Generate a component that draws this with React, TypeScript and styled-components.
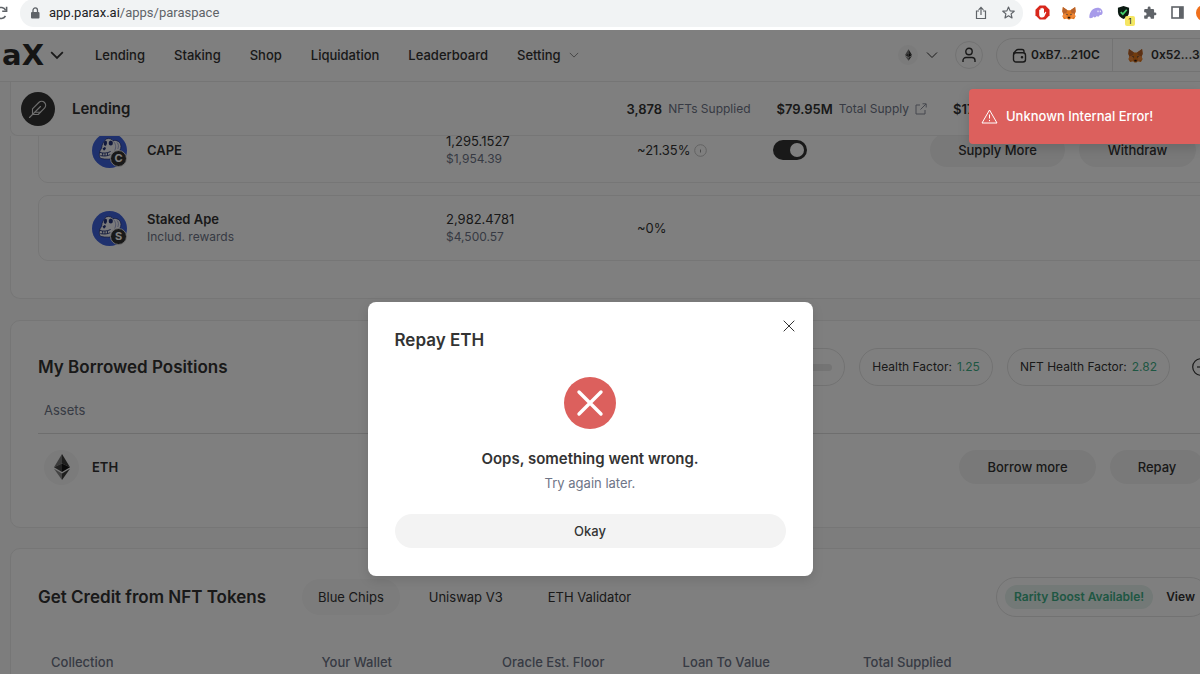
import React from "react";
import styled, { createGlobalStyle, css } from "styled-components";

const GlobalStyle = createGlobalStyle`
  *, *::before, *::after { box-sizing: border-box; }
  html, body, #root { height: 100%; }
  body {
    margin: 0;
    overflow: hidden;
    background: #fff;
    color: #333;
    font-family: Inter, "Liberation Sans", sans-serif;
    font-size: 13px;
    line-height: 18px;
  }
  button { font: inherit; color: inherit; border: 0; background: none; padding: 0; cursor: pointer; }
  a { color: inherit; text-decoration: none; }
  h1, h2, p { margin: 0; }
  svg { display: block; flex: none; }
`;

const Window = styled.div`
  display: flex;
  flex-direction: column;
  height: 100vh;
  overflow: hidden;
`;

/* Browser toolbar */

const BrowserBar = styled.header`
  display: flex;
  align-items: center;
  gap: 6px;
  height: 30px;
  flex: none;
  padding-bottom: 5px;
  background: #fff;
  color: #5f6368;
`;

const Reload = styled.button`
  display: flex;
  width: 14px;
  margin-left: -6px;
  margin-right: 6px;
  justify-content: flex-end;
  color: #5f6368;
`;

const AddressBar = styled.div`
  display: flex;
  align-items: center;
  flex: 1;
  gap: 7px;
  height: 28px;
  padding: 0 8px;
  border-radius: 14px;
  background: #f1f3f4;
`;

const Address = styled.div`
  flex: 1;
  font-family: Roboto, sans-serif;
  font-size: 13px;
  color: #5f6368;
  b { font-weight: 400; color: #202124; }
`;

const ToolButton = styled.button`
  position: relative;
  display: flex;
  align-items: center;
  justify-content: center;
  width: 14px;
  height: 20px;
  color: #5f6368;
`;

const AddressActions = styled.div`
  display: flex;
  gap: 13px;
`;

const Extensions = styled.div`
  display: flex;
  align-items: center;
  gap: 13px;
  margin: 0 -11px 0 6px;
`;

const ExtensionBadge = styled.span`
  position: absolute;
  right: -5px;
  bottom: -3px;
  width: 10px;
  height: 10px;
  border-radius: 2px;
  background: #f5e663;
  color: #222;
  font-size: 8px;
  line-height: 10px;
  text-align: center;
`;

/* Application page */

const Page = styled.div`
  position: relative;
  flex: 1;
  min-height: 0;
  overflow: hidden;
  background: #fafafa;
`;

const SiteNav = styled.nav`
  display: flex;
  align-items: center;
  height: 52px;
  padding-bottom: 1px;
  background: #fefefe;
  border-bottom: 1px solid #ebebeb;
  font-size: 13px;
  font-weight: 500;
`;

const Logo = styled.a`
  display: flex;
  justify-content: flex-end;
  width: 44px;
  font-family: "DejaVu Sans", sans-serif;
  font-size: 29px;
  line-height: 32px;
  font-weight: 700;
  color: #2b2b2b;
`;

const LogoMenu = styled.button`
  display: flex;
  margin: 0 31px 0 6px;
`;

const NavLinks = styled.div`
  display: flex;
  align-items: center;
  flex: 1;
  gap: 29px;
`;

const NavItem = styled.a`
  display: flex;
  align-items: center;
  gap: 8px;
  svg { color: #777; }
`;

const NavTools = styled.div`
  display: flex;
  align-items: center;
  flex: none;
  margin-right: -60px;
`;

const Network = styled.button`
  display: flex;
  align-items: center;
  gap: 8px;
  margin-right: 17px;
`;

const TokenDisc = styled.span<{ $size: number }>`
  display: flex;
  align-items: center;
  justify-content: center;
  width: ${(p) => p.$size}px;
  height: ${(p) => p.$size}px;
  border-radius: 50%;
  background: #f6f6f6;
`;

const RoundButton = styled.button`
  display: flex;
  align-items: center;
  justify-content: center;
  width: 28px;
  height: 28px;
  margin-right: 13px;
  border: 1px solid #e6e6e6;
  border-radius: 50%;
`;

const Wallets = styled.div`
  display: flex;
  height: 34px;
  border: 1px solid #e6e6e6;
  border-radius: 17px;
  font-size: 12px;
  font-weight: 600;
`;

const Wallet = styled.button<{ $width: number }>`
  display: flex;
  align-items: center;
  gap: 4px;
  width: ${(p) => p.$width}px;
  padding-left: 15px;
  & + & { border-left: 1px solid #e6e6e6; gap: 8px; }
`;

const panel = css`
  margin: 0 -38px 0 10px;
  border: 1px solid #ececec;
  background: #fff;
`;

const SubHeader = styled.header`
  ${panel}
  display: flex;
  align-items: center;
  height: 54px;
  padding-left: 10px;
  border-top: 0;
  border-radius: 0 0 8px 8px;
`;

const FeatherDisc = styled.span`
  display: flex;
  align-items: center;
  justify-content: center;
  width: 34px;
  height: 34px;
  margin-right: 17px;
  border-radius: 50%;
  background: #333;
  color: #ddd;
`;

const PageTitle = styled.h1`
  flex: 1;
  font-size: 15px;
  line-height: 20px;
  font-weight: 600;
`;

const Stats = styled.div`
  display: flex;
  gap: 26px;
`;

const Stat = styled.div`
  display: flex;
  align-items: center;
  gap: 6px;
  font-size: 12px;
  color: #6e7587;
  b { font-size: 13px; font-weight: 600; color: #333; }
`;

const LastStat = styled(Stat)`
  width: 284px;
`;

const SuppliedPanel = styled.section`
  ${panel}
  height: 163px;
  overflow: hidden;
  padding: 0 27px;
  border-top: 0;
  border-radius: 0 0 10px 10px;
`;

const SuppliedTable = styled.table`
  display: block;
  margin-top: -19px;
  tbody { display: flex; flex-direction: column; gap: 12px; }
`;

const SuppliedRow = styled.tr`
  display: grid;
  grid-template-columns: 354fr 191fr 136fr 157fr 279fr;
  align-items: center;
  height: 66px;
  padding-left: 53px;
  border: 1px solid #ececec;
  border-radius: 10px;
`;

const Cell = styled.td`
  padding: 0;
`;

const Asset = styled.div`
  display: flex;
  align-items: center;
  gap: 20px;
`;

const Strong = styled.span`
  display: block;
  font-size: 13px;
  font-weight: 600;
`;

const Value = styled.span`
  display: flex;
  align-items: center;
  gap: 4px;
  font-size: 13px;
`;

const Muted = styled.span`
  display: block;
  font-size: 12px;
  color: #6e7587;
`;

const Avatar = styled.span`
  position: relative;
  width: 35px;
  height: 35px;
`;

const AvatarBadge = styled.span`
  position: absolute;
  right: 0;
  bottom: 1px;
  width: 17px;
  height: 17px;
  border: 1px solid #ddd;
  border-radius: 50%;
  background: #333;
  color: #fff;
  font-size: 11px;
  line-height: 15px;
  font-weight: 700;
  text-align: center;
`;

const Switch = styled.input`
  appearance: none;
  display: block;
  width: 34px;
  height: 20px;
  margin: 0;
  padding: 3px;
  border-radius: 10px;
  background: #333;
  &::before {
    content: "";
    display: block;
    width: 14px;
    height: 14px;
    border-radius: 50%;
    background: #fff;
  }
  &:checked::before { margin-left: 14px; }
`;

const Actions = styled.div`
  display: flex;
  gap: 14px;
`;

const PillButton = styled.button<{ $width: number }>`
  width: ${(p) => p.$width}px;
  height: 34px;
  flex: none;
  border-radius: 17px;
  background: #f3f3f3;
  font-size: 13px;
  font-weight: 500;
`;

const BorrowedPanel = styled.section`
  ${panel}
  height: 208px;
  margin-top: 21px;
  padding: 27px 27px 0;
  border-radius: 10px;
`;

const PanelHead = styled.div`
  display: flex;
  align-items: center;
`;

const PanelTitle = styled.h2`
  font-size: 17px;
  line-height: 24px;
  font-weight: 600;
`;

const Factors = styled.div`
  display: flex;
  align-items: center;
  gap: 14px;
  margin-left: auto;
`;

const FactorPill = styled.div`
  display: flex;
  align-items: center;
  gap: 5px;
  height: 38px;
  padding: 0 12px;
  border: 1px solid #e4e4e4;
  border-radius: 19px;
  font-size: 12px;
  span { color: #3fae86; }
`;

const Meter = styled.i`
  width: 80px;
  height: 7px;
  border-radius: 4px;
  background: #e8e8e8;
`;

const MoreInfo = styled.button`
  display: flex;
  margin: 0 0 0 8px;
`;

const BorrowedTable = styled.table`
  display: block;
  thead, tbody { display: block; }
  th { padding: 0; font-weight: 400; color: #6e7587; }
`;

const BorrowedHead = styled.tr`
  display: flex;
  align-items: center;
  height: 48px;
  padding-left: 6px;
  border-bottom: 1px solid #dcdcdc;
`;

const BorrowedRow = styled.tr`
  display: flex;
  align-items: center;
  justify-content: space-between;
  height: 66px;
  padding: 0 6px;
`;

const EthAsset = styled(Asset)`
  gap: 13px;
`;

const CreditPanel = styled.section`
  ${panel}
  margin-top: 20px;
  padding: 28px 27px 0;
  border-radius: 10px;
  height: 240px;
`;

const Tabs = styled.div`
  display: flex;
  gap: 13px;
  margin-left: 36px;
`;

const Tab = styled.button<{ $active?: boolean }>`
  height: 36px;
  padding: 0 16px;
  border-radius: 18px;
  background: ${(p) => (p.$active ? "#f8f8f8" : "#fefefe")};
  font-size: 13px;
`;

const Boost = styled.div`
  display: flex;
  align-items: center;
  gap: 13px;
  width: 214px;
  height: 40px;
  margin-left: auto;
  padding-left: 8px;
  border: 1px solid #e4e4e4;
  border-radius: 20px;
  font-size: 12px;
  font-weight: 600;
`;

const BoostTag = styled.span`
  height: 24px;
  padding: 0 9px;
  border-radius: 12px;
  background: #e6f2ee;
  color: #3fae86;
  line-height: 24px;
  white-space: nowrap;
`;

const CreditTable = styled.table`
  width: 100%;
  margin-top: 36px;
  border-spacing: 0;
  table-layout: fixed;
  th {
    width: 15.4%;
    padding: 0;
    text-align: left;
    font-weight: 500;
    color: #6e7587;
  }
  th:first-child { width: 24.2%; padding-left: 13px; }
  th:last-child { width: auto; }
`;

/* Layers above the page */

const Overlay = styled.div`
  position: absolute;
  inset: 0;
  display: flex;
  justify-content: center;
  align-items: flex-start;
  padding: 272px 20px 0 0;
  background: rgba(0, 0, 0, 0.5);
`;

const Dialog = styled.div`
  position: relative;
  display: flex;
  flex-direction: column;
  align-items: center;
  width: 445px;
  padding: 26px 27px 28px;
  border-radius: 8px;
  background: #fff;
  box-shadow: 0 4px 12px rgba(0, 0, 0, 0.12);
`;

const DialogTitle = styled.h2`
  align-self: stretch;
  margin-bottom: 24px;
  font-size: 17px;
  line-height: 25px;
  font-weight: 600;
`;

const CloseButton = styled.button`
  position: absolute;
  top: 18px;
  right: 18px;
`;

const DialogMessage = styled.p`
  margin-top: 18px;
  font-size: 15px;
  line-height: 24px;
  font-weight: 600;
`;

const DialogHint = styled.p`
  margin-bottom: 19px;
  font-size: 13px;
  line-height: 24px;
  color: #6e7587;
`;

const OkayButton = styled.button`
  align-self: stretch;
  height: 34px;
  border-radius: 17px;
  background: #f3f3f3;
  font-size: 13px;
  font-weight: 500;
`;

const Toast = styled.div`
  position: absolute;
  top: 59px;
  right: 0;
  display: flex;
  align-items: center;
  gap: 8px;
  width: 231px;
  height: 55px;
  padding: 0 0 1px 12px;
  border-radius: 4px 0 0 4px;
  background: #dc605d;
  box-shadow: 0 4px 12px rgba(0, 0, 0, 0.15);
  color: #fff;
  font-size: 13px;
  font-weight: 500;
`;

/* Drawings */

const Chevron = ({ size = 12, width = 1.2 }: { size?: number; width?: number }) => (
  <svg width={size} height={size} viewBox="0 0 12 12" fill="none" stroke="currentColor" strokeWidth={width}>
    <path d="M1 3.5l5 5 5-5" />
  </svg>
);

const Fox = ({ size = 15 }: { size?: number }) => (
  <svg width={size} height={size} viewBox="0 0 16 16">
    <path d="M1 1l5.3 3.8h3.4L15 1l.6 5-1 3 .8 3-1.6 3-3.3-.8L9 15.500H7L5.500 14.200 2.200 15l-1.600-3 .8-3-1-3z" fill="#e2761b" />
    <path d="M1 1l5.300 3.800L5 8 1.400 9l-1-3zM15 1L9.700 4.800 11 8l3.600 1 1-3z" fill="#b8622a" />
    <path d="M5 8l.5 6.200L.6 12l.8-3zM11 8l-.5 6.200 4.900-2.200-.8-3z" fill="#f0893a" />
    <path d="M3.800 8.800l2.400.2.300 1.500zM12.200 8.800L9.800 9l-.3 1.500z" fill="#233447" />
    <path d="M6.600 13l.5-.6h1.800l.5.600-.4 1.400H7z" fill="#2b1a12" />
  </svg>
);

const EthMark = ({ height }: { height: number }) => (
  <svg width={Math.round(height * 0.62)} height={height} viewBox="0 0 16 26">
    <path d="M8 0L0 13.200 8 9.600z" fill="#777" />
    <path d="M8 0l8 13.200L8 9.600z" fill="#3c3c3b" />
    <path d="M0 13.200L8 9.600V18z" fill="#444" />
    <path d="M16 13.200L8 9.600V18z" fill="#141414" />
    <path d="M0 14.800l8 4.700V26z" fill="#888" />
    <path d="M16 14.800l-8 4.700V26z" fill="#3c3c3b" />
  </svg>
);

const ApeIcon = () => (
  <svg width="35" height="35" viewBox="0 0 35 35">
    <circle cx="17.500" cy="17.500" r="17.500" fill="#3f62dc" />
    <path
      d="M12.500 8.200C13 5.800 16 4.800 18.500 5.800c1.200.4 2 1 2.500 1.900C24.500 6.500 29 9 29 13.500c0 3-1.700 5.200-4 6L22.500 25c-3 1.500-9 1.500-13.500.5-1.800-.6-2.300-5-.8-8 .8-1.500 1.500-2 1.600-3.500.1-2 1.200-4.500 2.700-5.800z"
      fill="#f4f4f8"
      stroke="#25347a"
      strokeWidth=".8"
    />
    <ellipse cx="13.400" cy="10.300" rx="1.600" ry="2.600" transform="rotate(10 13.400 10.300)" fill="#25347a" />
    <ellipse cx="18.800" cy="10" rx="2.100" ry="2.600" fill="#25347a" />
    <path d="M10.500 15.500l2.600-1.700.8 1.900-1.900 2.100z" fill="#25347a" />
    <path d="M7.600 19.300c3.400 1.300 7.400 1 11-.8M8.300 22.600c4 .8 7.400.4 10-1M10.500 19.900l.3 3M13 20.200v2.900M15.500 19.800v2.800" fill="none" stroke="#25347a" strokeWidth=".9" />
    <path d="M21.500 8.500c2.300 2.500 2.900 5.500 1.200 9M25 9.500c1.600 1.500 1.800 4 .8 6.500" fill="none" stroke="#8a93c4" strokeWidth=".8" />
  </svg>
);

const ApeAvatar = ({ letter }: { letter: string }) => (
  <Avatar>
    <ApeIcon />
    <AvatarBadge>{letter}</AvatarBadge>
  </Avatar>
);

const navItems = ["Lending", "Staking", "Shop", "Liquidation", "Leaderboard"];
const creditColumns = ["Collection", "Your Wallet", "Oracle Est. Floor", "Loan To Value", "Total Supplied", ""];

const BrowserToolbar = () => (
  <BrowserBar>
    <Reload aria-label="Reload">
      <svg width="14" height="14" viewBox="0 0 14 14" fill="none" stroke="currentColor" strokeWidth="1.600">
        <path d="M11.500 10A5.500 5.500 0 1 1 11.700 4.300" />
        <path d="M12.600 .8v4.400H8.200" />
      </svg>
    </Reload>
    <AddressBar>
      <svg width="14" height="14" viewBox="0 0 14 14">
        <rect x="3" y="6" width="8.500" height="6.500" rx="1" fill="#5f6368" />
        <path d="M5 6V4.200a2.200 2.200 0 0 1 4.500 0V6" fill="none" stroke="#5f6368" strokeWidth="1.300" />
      </svg>
      <Address><b>app.parax.ai</b>/apps/paraspace</Address>
      <AddressActions>
        <ToolButton aria-label="Share">
          <svg width="12" height="14" viewBox="0 0 12 14" fill="none" stroke="currentColor" strokeWidth="1.200">
            <path d="M4 5H1.500v7.500h9V5H8M6 9V1.500M3.600 3.800L6 1.400l2.400 2.400" />
          </svg>
        </ToolButton>
        <ToolButton aria-label="Bookmark">
          <svg width="13" height="13" viewBox="0 0 24 24" fill="none" stroke="currentColor" strokeWidth="2.200" strokeLinejoin="round">
            <path d="M12 2l3 7 7.500.6-5.700 5 1.700 7.400L12 18l-6.500 4 1.700-7.400-5.700-5L9 9z" />
          </svg>
        </ToolButton>
      </AddressActions>
    </AddressBar>
    <Extensions>
      <ToolButton aria-label="Ad blocker">
        <svg width="15" height="15" viewBox="0 0 16 16">
          <path d="M5 .5h6L15.500 5v6L11 15.500H5L.5 11V5z" fill="#d8271c" />
          <path d="M4.500 8V5.200q.6-.8 1.200 0V8V3.800q.7-.8 1.300 0V7.500V3.200q.7-.8 1.300 0v4.300V4q.7-.8 1.300 0v5l1.500-1.700q1-.2.900.6L10 12.300q-1 1-2.500 1-3 0-3-3z" fill="#fff" />
        </svg>
      </ToolButton>
      <ToolButton aria-label="MetaMask"><Fox size={14} /></ToolButton>
      <ToolButton aria-label="Phantom">
        <svg width="14" height="12" viewBox="0 0 14 12">
          <path d="M.3 10C.5 4.500 4 .7 8.500.7c3.300 0 5.300 2.300 5.100 5C13.400 7.800 12 8.300 10.800 8c-1.200 2.500-2.300 1.800-2.900.8-1.300 2.200-2.700 2-3.200.7-1.400 2-4.300 2.300-4.400.5z" fill="#a79bea" />
          <path d="M9 3.600v1.600M11.300 3.600v1.600" stroke="#fff" strokeWidth="1" />
        </svg>
      </ToolButton>
      <ToolButton aria-label="Shield">
        <svg width="13" height="13" viewBox="0 0 14 14">
          <path d="M7 0l6 2v4.500c0 3.500-2.500 6-6 7.500-3.500-1.500-6-4-6-7.500V2z" fill="#0b1a12" />
          <path d="M4 6.500l2.300 2.300L10.500 4" fill="none" stroke="#43d16b" strokeWidth="1.800" />
        </svg>
        <ExtensionBadge>1</ExtensionBadge>
      </ToolButton>
      <ToolButton aria-label="Extensions">
        <svg width="14" height="14" viewBox="0 0 24 24" fill="currentColor">
          <path d="M20.500 11H19V7a2 2 0 0 0-2-2h-4V3.500a2.500 2.500 0 0 0-5 0V5H4a2 2 0 0 0-2 2v3.800h1.500a2.700 2.700 0 0 1 0 5.400H2V20a2 2 0 0 0 2 2h3.800v-1.500a2.700 2.700 0 0 1 5.400 0V22H17a2 2 0 0 0 2-2v-4h1.500a2.500 2.500 0 0 0 0-5z" />
        </svg>
      </ToolButton>
      <ToolButton aria-label="Side panel">
        <svg width="13" height="13" viewBox="0 0 13 13">
          <rect x="1" y="1" width="11" height="11" fill="none" stroke="#5f6368" strokeWidth="1.600" />
          <rect x="8" y="1" width="4" height="11" fill="#5f6368" />
        </svg>
      </ToolButton>
      <ToolButton aria-label="Profile">
        <svg width="16" height="16" viewBox="0 0 16 16"><circle cx="8" cy="8" r="8" fill="#f0701c" /></svg>
      </ToolButton>
    </Extensions>
  </BrowserBar>
);

const SiteHeader = () => (
  <SiteNav>
    <Logo href="#">aX</Logo>
    <LogoMenu aria-label="Products"><Chevron size={14} width={1.5} /></LogoMenu>
    <NavLinks>
      {navItems.map((item) => <NavItem key={item} href="#">{item}</NavItem>)}
      <NavItem href="#">Setting <Chevron size={10} width={1} /></NavItem>
    </NavLinks>
    <NavTools>
      <Network aria-label="Network">
        <TokenDisc $size={20}><EthMark height={12} /></TokenDisc>
        <Chevron width={1} />
      </Network>
      <RoundButton aria-label="Account">
        <svg width="14" height="16" viewBox="0 0 14 16" fill="none" stroke="currentColor" strokeWidth="1.400">
          <circle cx="7" cy="4.500" r="3.200" />
          <path d="M1 15v-1.500a3 3 0 0 1 3-3h6a3 3 0 0 1 3 3V15" />
        </svg>
      </RoundButton>
      <Wallets>
        <Wallet $width={115}>
          <svg width="15" height="15" viewBox="0 0 15 15" fill="none" stroke="currentColor" strokeWidth="1.400">
            <path d="M1.700 6.500V5L4.300 2.200Q5 1.500 6 1.500H10q2 0 2 2v1.200" />
            <rect x="1.500" y="4.700" width="12" height="9.300" rx="2.500" />
            <circle cx="10" cy="9.200" r=".6" fill="currentColor" />
          </svg>
          0xB7...210C
        </Wallet>
        <Wallet $width={147}><Fox />0x52...36A1</Wallet>
      </Wallets>
    </NavTools>
  </SiteNav>
);

const LendingHeader = () => (
  <SubHeader>
    <FeatherDisc>
      <svg width="20" height="20" viewBox="0 0 20 20" fill="none" stroke="currentColor" strokeWidth="1.100" strokeLinejoin="round" strokeLinecap="round">
        <path d="M4.500 15.500V9.800L10.800 3.500a4 4 0 0 1 5.700 5.700l-6.300 6.300z" />
        <path d="M1.500 18.500L12.500 7.500M6.500 13.300h5.700" />
      </svg>
    </FeatherDisc>
    <PageTitle>Lending</PageTitle>
    <Stats>
      <Stat><b>3,878</b>NFTs Supplied</Stat>
      <Stat>
        <b>$79.95M</b>Total Supply
        <svg width="12" height="12" viewBox="0 0 12 12" fill="none" stroke="#8a8f9c" strokeWidth="1">
          <path d="M5 2H1v9h9V7M7.500 .8h3.700v3.700M11 1L5.500 6.500" />
        </svg>
      </Stat>
      <LastStat><b>$17.30M</b></LastStat>
    </Stats>
  </SubHeader>
);

const SuppliedPositions = () => (
  <SuppliedPanel>
    <SuppliedTable>
      <tbody>
        <SuppliedRow>
          <Cell><Asset><ApeAvatar letter="C" /><Strong>CAPE</Strong></Asset></Cell>
          <Cell><Value>1,295.1527</Value><Muted>$1,954.39</Muted></Cell>
          <Cell>
            <Value>
              ~21.35%
              <svg width="13" height="13" viewBox="0 0 13 13" fill="none" stroke="#c4c4c4">
                <circle cx="6.500" cy="6.500" r="5.800" />
                <path d="M6.500 5.500v3" stroke="#999" />
              </svg>
            </Value>
          </Cell>
          <Cell><Switch type="checkbox" role="switch" defaultChecked aria-label="Use CAPE as collateral" /></Cell>
          <Cell>
            <Actions>
              <PillButton $width={135}>Supply More</PillButton>
              <PillButton $width={117}>Withdraw</PillButton>
            </Actions>
          </Cell>
        </SuppliedRow>
        <SuppliedRow>
          <Cell>
            <Asset>
              <ApeAvatar letter="S" />
              <div><Strong>Staked Ape</Strong><Muted>Includ. rewards</Muted></div>
            </Asset>
          </Cell>
          <Cell><Value>2,982.4781</Value><Muted>$4,500.57</Muted></Cell>
          <Cell><Value>~0%</Value></Cell>
          <Cell />
          <Cell />
        </SuppliedRow>
      </tbody>
    </SuppliedTable>
  </SuppliedPanel>
);

const BorrowedPositions = () => (
  <BorrowedPanel>
    <PanelHead>
      <PanelTitle>My Borrowed Positions</PanelTitle>
      <Factors>
        <FactorPill><Meter /></FactorPill>
        <FactorPill>Health Factor: <span>1.25</span></FactorPill>
        <FactorPill>NFT Health Factor: <span>2.82</span></FactorPill>
        <MoreInfo aria-label="Collapse">
          <svg width="18" height="18" viewBox="0 0 18 18" fill="none" stroke="currentColor" strokeWidth="1.200">
            <circle cx="9" cy="9" r="8.300" />
            <path d="M5 9h8" />
          </svg>
        </MoreInfo>
      </Factors>
    </PanelHead>
    <BorrowedTable>
      <thead><BorrowedHead><th scope="col">Assets</th></BorrowedHead></thead>
      <tbody>
        <BorrowedRow>
          <Cell>
            <EthAsset><TokenDisc $size={35}><EthMark height={26} /></TokenDisc><Strong>ETH</Strong></EthAsset>
          </Cell>
          <Cell>
            <Actions>
              <PillButton $width={137}>Borrow more</PillButton>
              <PillButton $width={94}>Repay</PillButton>
            </Actions>
          </Cell>
        </BorrowedRow>
      </tbody>
    </BorrowedTable>
  </BorrowedPanel>
);

const CreditTokens = () => (
  <CreditPanel>
    <PanelHead>
      <PanelTitle>Get Credit from NFT Tokens</PanelTitle>
      <Tabs>
        <Tab $active>Blue Chips</Tab>
        <Tab>Uniswap V3</Tab>
        <Tab>ETH Validator</Tab>
      </Tabs>
      <Boost><BoostTag>Rarity Boost Available!</BoostTag><a href="#">View</a></Boost>
    </PanelHead>
    <CreditTable>
      <thead>
        <tr>{creditColumns.map((name) => <th key={name} scope="col">{name}</th>)}</tr>
      </thead>
    </CreditTable>
  </CreditPanel>
);

const RepayDialog = () => (
  <Dialog role="dialog" aria-modal="true" aria-labelledby="repay-title">
    <DialogTitle id="repay-title">Repay ETH</DialogTitle>
    <CloseButton aria-label="Close">
      <svg width="12" height="12" viewBox="0 0 12 12" stroke="#333" strokeWidth="1"><path d="M.7.7l10.600 10.600M11.300.7L.7 11.300" /></svg>
    </CloseButton>
    <svg width="52" height="52" viewBox="0 0 52 52">
      <circle cx="26" cy="26" r="26" fill="#dc605d" />
      <path d="M15 15l22 22M37 15L15 37" stroke="#fff" strokeWidth="3.400" strokeLinecap="round" />
    </svg>
    <DialogMessage>Oops, something went wrong.</DialogMessage>
    <DialogHint>Try again later.</DialogHint>
    <OkayButton>Okay</OkayButton>
  </Dialog>
);

export default function App() {
  return (
    <Window>
      <GlobalStyle />
      <BrowserToolbar />
      <Page>
        <SiteHeader />
        <LendingHeader />
        <SuppliedPositions />
        <BorrowedPositions />
        <CreditTokens />
        <Overlay><RepayDialog /></Overlay>
        <Toast role="alert">
          <svg width="17" height="15" viewBox="0 0 17 15" fill="none" stroke="#fff" strokeWidth="1" strokeLinejoin="round">
            <path d="M8.500 1L16 14H1z" />
            <path d="M8.500 5.500v4M8.500 11v1.200" />
          </svg>
          Unknown Internal Error!
        </Toast>
      </Page>
    </Window>
  );
}
